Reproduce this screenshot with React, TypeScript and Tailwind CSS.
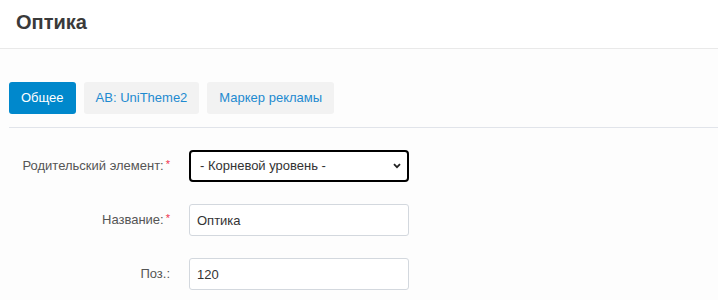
import React from "react";

const tabs = [
  { id: "general", label: "Общее", active: true },
  { id: "ab", label: "AB: UniTheme2", active: false },
  { id: "banner", label: "Маркер рекламы", active: false },
];

function Label({ text, required }: { text: string; required?: boolean }) {
  return (
    <label className="w-[161px] shrink-0 text-right text-[13px] text-[#555] leading-[32px]">
      {text}
      {required && (
        <span className="relative -top-[2px] ml-[2px] text-[11px] text-[#f0334d]">*</span>
      )}
    </label>
  );
}

export default function App() {
  return (
    <div className="w-[718px] h-[300px] overflow-hidden bg-[#fdfdfd] font-['Liberation_Sans',Arial,sans-serif]">
      <div className="h-[49px] bg-white border-b border-[#e9e9e9] pl-[16px] flex items-center">
        <h1 className="text-[20px] font-bold text-[#3a3a3a] -mt-[5px]">Оптика</h1>
      </div>

      <div className="pl-[9px] pt-[33px]">
        <div className="flex gap-[8px]">
          {tabs.map((t) => (
            <button
              key={t.id}
              className={
                t.active
                  ? "h-[32px] px-[12px] rounded-[3px] bg-[#0088cc] text-white text-[13px]"
                  : "h-[32px] px-[12px] rounded-[3px] bg-[#f2f2f2] text-[#1e8ad0] text-[13px]"
              }
            >
              {t.label}
            </button>
          ))}
        </div>

        <div className="mt-[13px] border-t border-[#e1e4ea]" />

        <div className="pt-[22px] flex flex-col gap-[22px]">
          <div className="flex gap-[19px]">
            <Label text="Родительский элемент:" required />
            <div className="relative w-[220px] h-[32px]">
              <select
                defaultValue="0"
                className="appearance-none w-full h-full border-2 border-black rounded-[4px] bg-white pl-[9px] text-[13px] text-[#333] outline-none"
              >
                <option value="0">- Корневой уровень -</option>
              </select>
              <svg
                className="pointer-events-none absolute right-[8px] top-[13px]"
                width="8"
                height="6"
                viewBox="0 0 8 6"
              >
                <path d="M1 1.2 L4 4.2 L7 1.2" fill="none" stroke="#222" strokeWidth="1.8" />
              </svg>
            </div>
          </div>

          <div className="flex gap-[19px]">
            <Label text="Название:" required />
            <input
              defaultValue="Оптика"
              className="w-[220px] h-[32px] border border-[#d3d8de] rounded-[3px] bg-white pl-[7px] text-[13px] text-[#333] outline-none"
            />
          </div>

          <div className="flex gap-[19px]">
            <Label text="Поз.:" />
            <input
              defaultValue="120"
              className="w-[220px] h-[32px] border border-[#d3d8de] rounded-[3px] bg-white pl-[7px] text-[13px] text-[#333] outline-none"
            />
          </div>
        </div>
      </div>
    </div>
  );
}
